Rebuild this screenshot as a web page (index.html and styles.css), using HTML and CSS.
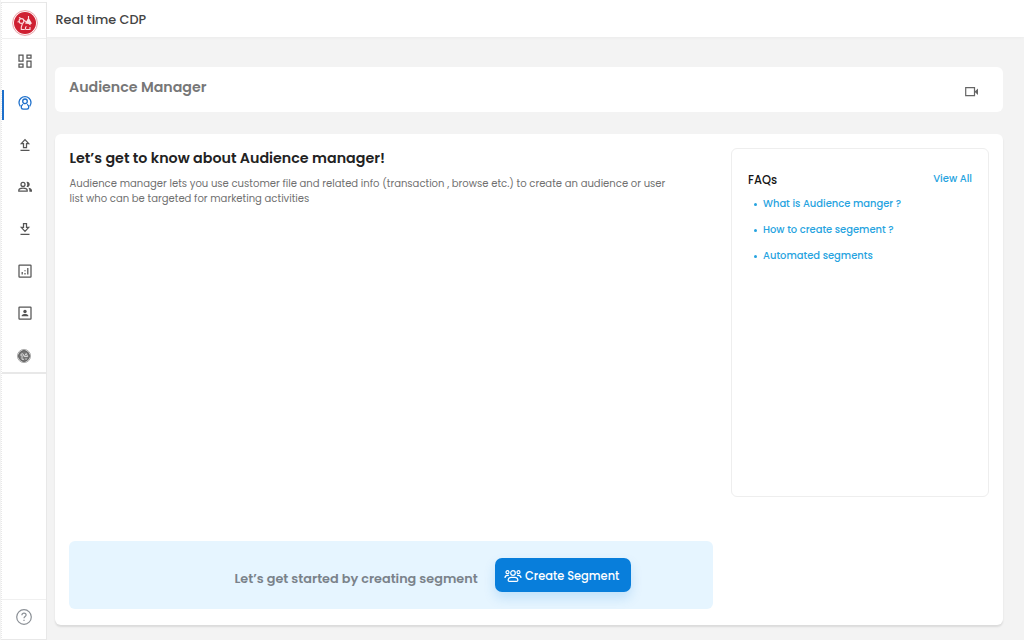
FILE: index.html
```html
<!DOCTYPE html>
<html lang="en">
<head>
<meta charset="utf-8">
<title>Real time CDP</title>
<link rel="stylesheet" href="styles.css">
</head>
<body>
<div class="app">
  <aside class="sidebar">
    <a class="logo">
      <svg width="28" height="28" viewBox="0 0 28 28" fill="none">
        <circle cx="14" cy="14" r="12.400" stroke="#e9a0a6" stroke-width="1"/>
        <circle cx="14" cy="14" r="11" fill="#cf2032"/>
        <g stroke="#fbdde0" stroke-width="1.100"><circle cx="10.500" cy="12" r="2.400"/><path d="M8 8.500l2 1M11.500 14.500L10.300 18v2.500h3.500M12.500 11l3 2M15.500 17.500c-1.500.5-1.500 3 0 3h3.500v-2.500M17.500 9V7M6.500 13l2-.5"/></g>
        <path d="M14 14.500l3.500-6 3.500 6-1.500.5v1.500l-2-1.500z" fill="#fbe5e7"/>
      </svg>
    </a>
    <nav class="nav">
      <a class="item"><svg class="icon" viewBox="0 0 16 16"><path d="M2 2h4v6H2zM10 2h4v3h-4zM2 11h4v3H2zM10 8h4v6h-4z"/></svg></a>
      <a class="item active"><svg class="icon" viewBox="0 0 16 16"><path d="M3.300 11.300a6 6 0 1 1 9.400 0"/><circle cx="8" cy="6.300" r="2.300"/><path d="M5.900 9.300c-1.100.8-1.900 2.400-1.600 3.500.3 1 1.200 1.400 2.200 1.400h3c1 0 1.900-.4 2.200-1.400.3-1.100-.5-2.700-1.600-3.500"/></svg></a>
      <a class="item"><svg class="icon" viewBox="0 0 16 16"><path d="M3.500 13.300h9M6.500 10.500V6.700H4.300L8 2.700l3.700 4H9.500v3.800z"/></svg></a>
      <a class="item"><svg class="icon" viewBox="0 0 16 16"><circle cx="6" cy="5.400" r="2"/><path d="M1.800 12.200v-.8c0-1.500 2.200-2.200 4.200-2.200s4.200.7 4.200 2.200v.8z"/><path class="solid" d="M9.500 2.900c1.700-.4 3.200.8 3.200 2.500s-1.500 2.900-3.200 2.500c1-1.400 1-3.600 0-5zM11.300 8.800c2 .3 3.700 1.100 3.700 2.700v1.200h-2.600v-1.200c0-1.100-.4-1.900-1.100-2.700z"/></svg></a>
      <a class="item"><svg class="icon" viewBox="0 0 16 16"><path d="M3.500 13.300h9M6.500 2.500v3.800H4.300L8 10.300l3.700-4H9.500V2.500z"/></svg></a>
      <a class="item"><svg class="icon" viewBox="0 0 16 16"><rect x="2" y="2" width="12" height="12" rx=".6"/><path d="M5.200 9v2.500M8 10v1.500M8 7.200v1M10.800 5v6.500"/></svg></a>
      <a class="item"><svg class="icon" viewBox="0 0 16 16"><rect x="2" y="2" width="12" height="12" rx=".6"/><circle class="solid" cx="8" cy="6.500" r="1.700"/><path class="solid" d="M4.700 11.300v-.7c0-1.200 1.700-1.700 3.300-1.700s3.300.5 3.300 1.700v.7z"/></svg></a>
      <a class="item seal"><svg class="icon" viewBox="0 0 16 16"><circle cx="8" cy="8" r="6.600" stroke="#999" stroke-width=".8"/><circle cx="8" cy="8" r="5.400" fill="#777" stroke="#555" stroke-width="1"/><circle cx="6.200" cy="7" r="1.300" stroke="#eee" stroke-width=".8"/><path d="M6 9v2.300h2M8.200 8.500l2-3 1.500 3zM9.300 11h1.500" stroke="#eee" stroke-width=".8"/></svg></a>
    </nav>
    <a class="help"><svg width="18" height="18" viewBox="0 0 18 18" fill="none" stroke="#8b9096" stroke-width="1.200"><circle cx="9" cy="9" r="7.300"/><path d="M6.900 7.200c0-1.200.9-2 2.100-2s2.100.8 2.100 1.900c0 1.400-2.100 1.500-2.100 3.100M9 11.800v1.200"/></svg></a>
  </aside>
  <div class="content">
    <header class="topbar">Real time CDP</header>
    <main class="page">
      <section class="title-card">
        <h1>Audience Manager</h1>
        <svg class="video" width="16" height="12" viewBox="0 0 16 12"><path d="M1.700 1.700h8.800v8H1.700z" fill="none" stroke="#666" stroke-width="1.200"/><path d="M11 5.300l3-2.700v6.400l-3-2.700z" fill="#666"/></svg>
      </section>
      <section class="main-card">
        <div class="intro">
          <div>
            <h2>Let’s get to know about Audience manager!</h2>
            <p>Audience manager lets you use customer file and related info (transaction , browse etc.) to create an audience or user<br>list who can be targeted for marketing activities</p>
          </div>
          <div class="cta">
            <span>Let’s get started by creating segment</span>
            <button class="button">
              <svg width="18" height="14" viewBox="0 0 18 14" fill="none" stroke="#fff" stroke-width="1.200"><circle cx="9" cy="4" r="2.300"/><circle cx="3.500" cy="3.200" r="1.500"/><circle cx="14.500" cy="3.200" r="1.500"/><path d="M5.500 12.300c-1.100 0-1.500-.6-1.300-1.700.3-1.600 1.400-2.300 2.800-2.300h4c1.400 0 2.500.7 2.800 2.300.2 1.100-.2 1.700-1.300 1.700zM1 9c0-1.700 1-2.600 2.700-2.600h1.200M17 9c0-1.700-1-2.600-2.700-2.600h-1.200"/></svg>
              <span>Create Segment</span>
            </button>
          </div>
        </div>
        <aside class="faq">
          <div class="faq-head"><h3>FAQs</h3><a>View All</a></div>
          <ul>
            <li><a>What is Audience manger ?</a></li>
            <li><a>How to create segement ?</a></li>
            <li><a>Automated segments</a></li>
          </ul>
        </aside>
      </section>
    </main>
  </div>
</div>
</body>
</html>
```
FILE: styles.css
```css
* { box-sizing: border-box; }
body { margin: 0; font-family: Poppins, Inter, "Open Sans", sans-serif; background: #f3f3f3; }
h1, h2, h3, p, ul { margin: 0; padding: 0; font: inherit; white-space: nowrap; }
span, a { white-space: nowrap; }
.app { display: flex; height: 640px; overflow: hidden; }
.sidebar { width: 46px; margin: 2px 0 0 1px; height: 638px; background: #fff; border: 1px solid #e8e8e8; border-left-style: dotted; display: flex; flex-direction: column; box-shadow: 0 -2px 0 #fff; }
.logo { height: 36px; border-bottom: 1px solid #eee; display: flex; align-items: center; justify-content: center; padding: 5px 0 0 1px; }
.nav { height: 335px; border-bottom: 2px solid #e8e8e8; padding-top: 1px; }
.item { height: 42px; display: flex; align-items: center; justify-content: center; padding-left: 1px; }
.item.active { height: 30px; margin: 8px 0 4px; border-left: 2px solid #1c6fcb; padding: 0 1px 4px 0; }
.icon { width: 16px; height: 16px; fill: none; stroke: #555; stroke-width: 1.25; }
.icon .solid { fill: #555; stroke: none; }
.active .icon { stroke: #1c6fcb; stroke-width: 1.3; }
.seal { padding: 1px 1px 0 0; }
.help { margin-top: auto; height: 40px; border-top: 1px solid #f0f0f0; display: flex; align-items: center; justify-content: center; padding: 0 1px 5px 0; }
.content { flex: 1; }
.topbar { height: 37px; background: #fff; padding: 11px 8.5px; font-size: 12.8px; line-height: 17px; font-weight: 500; color: #444; box-shadow: 0 1px 3px rgba(0,0,0,.03); }
.page { padding: 30px 21px 0 8px; display: flex; flex-direction: column; gap: 22px; }
.title-card { height: 45px; background: #fff; border-radius: 6px; padding: 0 23px 0 14px; display: flex; justify-content: space-between; font-size: 14.2px; line-height: 21px; font-weight: 600; color: #777; }
.title-card h1 { padding-top: 10px; }
.video { margin-top: 19px; }
.main-card { height: 491px; background: #fff; border-radius: 6px; padding: 14px 14px 16px; display: flex; justify-content: space-between; box-shadow: 0 2px 2px rgba(0,0,0,.1); }
.intro { width: 644px; display: flex; flex-direction: column; justify-content: space-between; }
.intro h2 { font-size: 14.25px; line-height: 21px; font-weight: 600; color: #222; padding-left: .5px; }
.intro p { padding: 7px 0 0 .5px; font-size: 10.05px; line-height: 15px; color: #707070; }
.cta { height: 68px; border-radius: 6px; background: #e6f5ff; display: flex; padding: 17px 82px 0 165.5px; justify-content: space-between; color: #7a828a; font-size: 12.8px; font-weight: 600; line-height: 41px; }
.button { width: 136px; height: 34px; border: 0; border-radius: 7px; background: #087edb; color: #fff; font: 500 11.4px/35px Poppins, Inter, sans-serif; display: flex; align-items: center; gap: 3px; padding: 2px 0 0 9px; box-shadow: 0 6px 12px rgba(8,126,219,.17); }
.faq { width: 258px; height: 349px; border: 1px solid #eee; border-radius: 6px; padding: 23px 16px; }
.faq-head { display: flex; justify-content: space-between; line-height: 16px; font-size: 11.5px; font-weight: 500; color: #151515; }
.faq-head a { font-size: 10px; line-height: 13px; font-weight: 500; color: #26a3e0; }
.faq ul { list-style: none; padding: 3px 0 0 6px; }
.faq li { height: 26px; line-height: 26px; display: flex; align-items: center; font-size: 9.95px; font-weight: 500; color: #26a3e0; }
.faq li::before { content: ""; width: 3px; height: 3px; border-radius: 50%; background: #26a3e0; margin-right: 6px; }
```
